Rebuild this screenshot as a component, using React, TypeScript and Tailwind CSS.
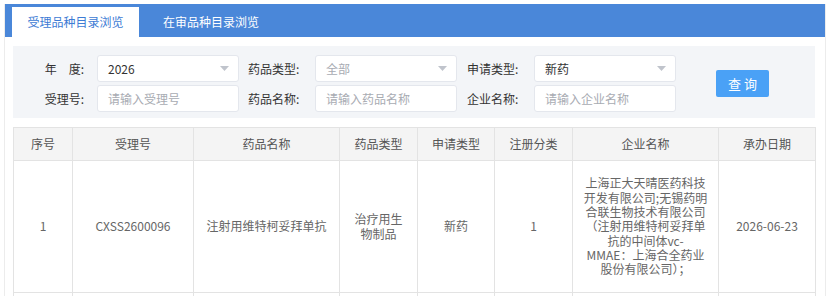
import React from "react";

const Caret = () => (
  <svg width="9" height="5" viewBox="0 0 9 5" className="shrink-0">
    <path d="M0 0 L9 0 L4.5 5 Z" fill="#c0c4cc" />
  </svg>
);

function SelectBox({ value, muted }: { value: string; muted?: boolean }) {
  return (
    <div className="flex h-[27px] w-[142px] items-center justify-between rounded-[3px] border border-[#e4e7ed] bg-white pl-[10px] pr-[9px]">
      <span className={muted ? "text-[#a8abb2]" : "text-[#333]"}>{value}</span>
      <Caret />
    </div>
  );
}

function InputBox({ placeholder }: { placeholder: string }) {
  return (
    <div className="flex h-[27px] w-[142px] items-center rounded-[3px] border border-[#e4e7ed] bg-white pl-[10px]">
      <span className="text-[#a8abb2]">{placeholder}</span>
    </div>
  );
}

const companyLines = [
  "上海正大天晴医药科技",
  "开发有限公司;无锡药明",
  "合联生物技术有限公司",
  "（注射用维特柯妥拜单",
  "抗的中间体vc-",
  "MMAE：上海合全药业",
  "股份有限公司）；",
];

export default function App() {
  const cols = [59, 121, 146, 78, 77, 78, 146, 97];
  const headers = ["序号", "受理号", "药品名称", "药品类型", "申请类型", "注册分类", "企业名称", "承办日期"];
  const row: React.ReactNode[] = [
    "1",
    "CXSS2600096",
    "注射用维特柯妥拜单抗",
    "治疗用生物制品",
    "新药",
    "1",
    companyLines.map((l, i) => (
      <div key={i} className="whitespace-nowrap">
        {l}
      </div>
    )),
    "2026-06-23",
  ];
  return (
    <div className="h-[296px] w-[832px] overflow-hidden bg-white pt-[4px] font-['Noto_Sans_CJK_SC','Noto_Sans',sans-serif] text-[12px]">
      <div className="ml-[4px] h-[300px] w-[822px] border-x border-[#ececec]">
        {/* Tabs */}
        <div className="flex h-[33px] items-end bg-[#4a87d9] pl-[7px]">
          <div className="flex h-[30px] w-[127px] items-center justify-center bg-white text-[#3d7bd4]">
            受理品种目录浏览
          </div>
          <div className="flex h-[30px] items-center pl-[24px] text-white">在审品种目录浏览</div>
        </div>

        {/* Search panel */}
        <div className="ml-[8px] mt-[9px] flex w-[802px] items-center bg-[#f3f5f8] pb-[6px] pt-[9px] text-[#333]">
          <div className="flex flex-col gap-[3px]">
            <div className="flex items-center">
              <div className="w-[71px] text-right">年　度:</div>
              <div className="ml-[13px]">
                <SelectBox value="2026" />
              </div>
              <div className="ml-[9px] w-[67px]">药品类型:</div>
              <SelectBox value="全部" muted />
              <div className="ml-[10px] w-[67px]">申请类型:</div>
              <SelectBox value="新药" />
            </div>
            <div className="flex items-center">
              <div className="w-[71px] text-right">受理号:</div>
              <div className="ml-[13px]">
                <InputBox placeholder="请输入受理号" />
              </div>
              <div className="ml-[9px] w-[67px]">药品名称:</div>
              <InputBox placeholder="请输入药品名称" />
              <div className="ml-[10px] w-[67px]">企业名称:</div>
              <InputBox placeholder="请输入企业名称" />
            </div>
          </div>
          <button className="ml-[40px] flex h-[27px] w-[53px] items-center justify-center rounded-[2px] bg-[#4aa1f6] pl-[3px] text-[13px] tracking-[3px] text-white">
            查询
          </button>
        </div>

        {/* Table */}
        <table className="ml-[8px] mt-[9px] w-[802px] table-fixed border-collapse text-[12px] text-[#666]">
          <colgroup>
            {cols.map((w, i) => (
              <col key={i} style={{ width: w }} />
            ))}
          </colgroup>
          <thead>
            <tr className="h-[33px] bg-[#f4f4f4]">
              {headers.map((h) => (
                <th key={h} className="border border-[#e3e3e3] font-normal text-[#555]">
                  {h}
                </th>
              ))}
            </tr>
          </thead>
          <tbody>
            <tr className="h-[132px]">
              {row.map((c, i) => (
                <td key={i} className="border border-[#e3e3e3] px-[10px] text-center align-middle leading-[1.2]">
                  {c}
                </td>
              ))}
            </tr>
            <tr className="h-[40px]">
              {cols.map((_, i) => (
                <td key={i} className="border border-[#e3e3e3]"></td>
              ))}
            </tr>
          </tbody>
        </table>
      </div>
    </div>
  );
}
